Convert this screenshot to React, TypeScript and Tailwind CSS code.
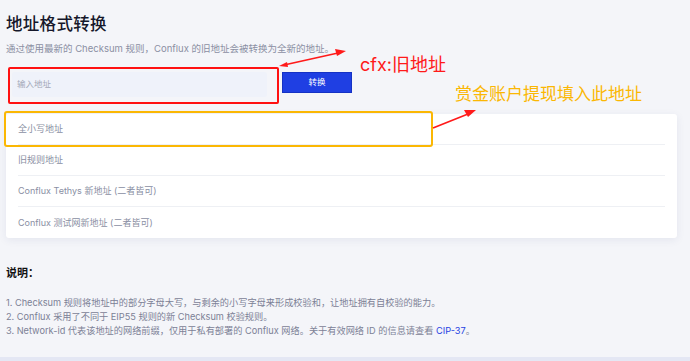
import React from 'react';

const font = { fontFamily: 'Inter, "Noto Sans CJK SC", sans-serif' };

const rows = [
  '全小写地址',
  '旧规则地址',
  'Conflux Tethys 新地址 (二者皆可)',
  'Conflux 测试网新地址 (二者皆可)',
];

const notes = [
  '1. Checksum 规则将地址中的部分字母大写，与剩余的小写字母来形成校验和，让地址拥有自校验的能力。',
  '2. Conflux 采用了不同于 EIP55 规则的新 Checksum 校验规则。',
];

const Arrows: React.FC = () => (
  <svg className="absolute left-0 top-0 pointer-events-none" width="690" height="361">
    {/* double arrow between input and note */}
    <line x1="284" y1="65" x2="338" y2="53" stroke="#ff1a1a" strokeWidth="1.6" />
    <polygon points="346,51 335,49 337,56" fill="#ff1a1a" />
    <polygon points="279,66 287,62 288,67" fill="#ff1a1a" />
    {/* arrow from orange box */}
    <line x1="433" y1="128" x2="468" y2="114" stroke="#ff1a1a" strokeWidth="1.6" />
    <polygon points="476,110 464,110 468,117" fill="#ff1a1a" />
  </svg>
);

export default function App() {
  return (
    <div className="relative w-[690px] h-[361px] overflow-hidden bg-[#f4f5f9]" style={font}>
      <div className="flex flex-col pl-[6px] pr-[13px] pt-[13px]">
        <h1 className="text-[16.5px] leading-[22px] font-medium text-[#15172a] tracking-[0.3px]">地址格式转换</h1>
        <p className="mt-[7px] text-[9.5px] leading-[14px] text-[#8b8fa3]">
          通过使用最新的 Checksum 规则，Conflux 的旧地址会被转换为全新的地址。
        </p>

        <div className="mt-[16px] flex items-start gap-[15px] pl-[6px]">
          <div className="w-[255px] h-[25px] rounded-[2px] bg-[#eff2fa] flex items-center pl-[5px] text-[8.5px] text-[#a3a8b8]">
            输入地址
          </div>
          <button className="w-[70px] h-[21px] bg-[#1f3fe3] border border-[#1532c4] text-white text-[8.5px] flex items-center justify-center">
            转换
          </button>
        </div>

        <div className="mt-[17px] bg-white rounded-[3px] shadow-[0_2px_8px_rgba(40,50,110,0.08)] px-[12px]">
          {rows.map((r, i) => (
            <div
              key={r}
              className={`h-[31px] flex items-center text-[9px] text-[#8a8fa3] ${i < rows.length - 1 ? 'border-b border-[#eef0f4]' : ''}`}
            >
              {r}
            </div>
          ))}
        </div>

        <div className="mt-[27px] text-[11px] font-bold text-[#111]">说明：</div>
        <div className="mt-[14px] flex flex-col text-[9.2px] leading-[14px] text-[#7c8196]">
          {notes.map((n) => (
            <div key={n}>{n}</div>
          ))}
          <div>
            3. Network-id 代表该地址的网络前缀，仅用于私有部署的 Conflux 网络。关于有效网络 ID 的信息请查看{' '}
            <span className="text-[#1f3fe3]">CIP-37</span>。
          </div>
        </div>
      </div>

      <div className="absolute left-0 bottom-0 w-full h-[4px] bg-[#e4e7f4]" />

      {/* annotations */}
      <div className="absolute left-[8px] top-[67px] w-[271px] h-[37px] border-2 border-[#ff1111] rounded-[2px]" />
      <div className="absolute left-[4px] top-[111px] w-[429px] h-[36px] border-2 border-[#fbb703] rounded-[3px]" />
      <div className="absolute left-[360px] top-[53px] text-[18px] leading-[24px] text-[#ff1a1a]">cfx:旧地址</div>
      <div className="absolute left-[455px] top-[82px] text-[17px] leading-[24px] text-[#fbb703]">赏金账户提现填入此地址</div>
      <Arrows />
    </div>
  );
}
